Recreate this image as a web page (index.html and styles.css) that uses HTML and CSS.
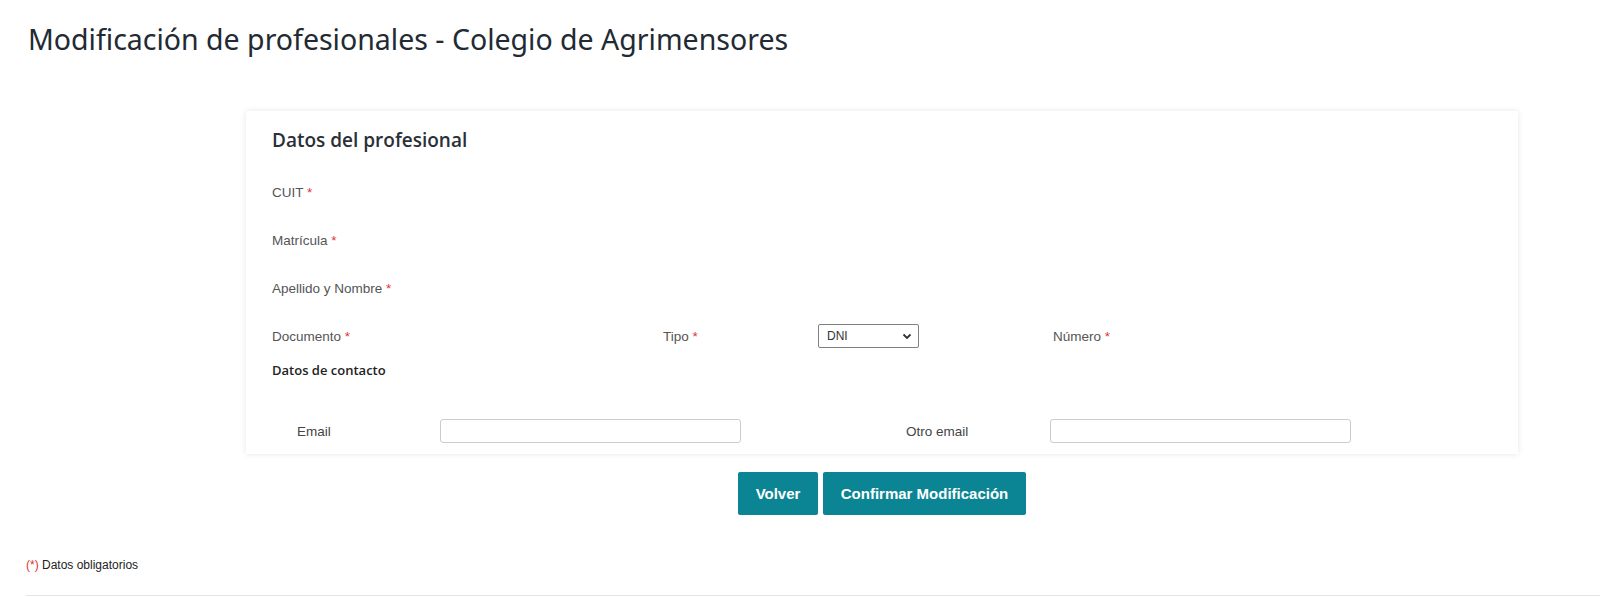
FILE: index.html
```html
<!DOCTYPE html>
<html lang="es">
<head>
<meta charset="utf-8">
<title>Modificación de profesionales</title>
<link rel="stylesheet" href="styles.css">
</head>
<body>
<h1 class="page-title">Modificación de profesionales - Colegio de Agrimensores</h1>
<div class="card">
  <h2 class="card-title">Datos del profesional</h2>
  <div class="fields">
    <div class="field"><span class="lbl">CUIT <span class="req">*</span></span></div>
    <div class="field"><span class="lbl">Matrícula <span class="req">*</span></span></div>
    <div class="field"><span class="lbl">Apellido y Nombre <span class="req">*</span></span></div>
    <div class="field doc-row">
      <span class="lbl">Documento <span class="req">*</span></span>
      <span class="lbl">Tipo <span class="req">*</span></span>
      <div class="select"><span>DNI</span>
        <svg width="10" height="7" viewBox="0 0 10 7"><path d="M1.5 1.5 L5 5 L8.5 1.5" fill="none" stroke="#333" stroke-width="1.8"/></svg>
      </div>
      <span class="lbl">Número <span class="req">*</span></span>
    </div>
  </div>
  <h3 class="sub-title">Datos de contacto</h3>
  <div class="contact-row">
    <span class="lbl lbl-c">Email</span>
    <div class="input"></div>
    <span class="lbl lbl-c2">Otro email</span>
    <div class="input"></div>
  </div>
</div>
<div class="actions">
  <button class="btn btn-back">Volver</button>
  <button class="btn btn-ok">Confirmar Modificación</button>
</div>
<p class="note"><span class="req2">(*)</span> Datos obligatorios</p>
<div class="rule"></div>
</body>
</html>
```

FILE: styles.css
```css
html, body { margin: 0; padding: 0; background: #fff; }
body { width: 1600px; height: 597px; overflow: hidden; font-family: "Liberation Sans", Arial, sans-serif; }
.page-title {
  margin: 0; padding: 19px 0 0 28px;
  font-family: "Noto Sans", Roboto, sans-serif; font-weight: 400; font-size: 28.5px; line-height: 40px;
  color: #222a33;
}
.card {
  margin: 52px 0 0 246px; width: 1272px; height: 343px; box-sizing: border-box;
  padding: 16px 26px 0 26px;
  background: #fff;
  box-shadow: 0 0 6px rgba(0,0,0,0.10);
}
.card-title {
  margin: 0; font-family: "Open Sans", "Noto Sans", sans-serif; font-weight: 600; font-size: 19px;
  line-height: 26px; color: #2b3038;
}
.fields { margin-top: 15px; }
.field { height: 48px; display: flex; align-items: center; }
.lbl { font-size: 13.5px; color: #555; white-space: nowrap; }
.req { color: #e0343b; }
.doc-row { display: grid; grid-template-columns: 391px 155px 235px 1fr; align-items: center; }
.select {
  width: 101px; height: 24px; box-sizing: border-box; border: 1px solid #808080; border-radius: 2px;
  display: flex; align-items: center; justify-content: space-between; padding: 0 6px 0 8px;
  font-size: 12px; color: #333;
}
.sub-title { margin: 0; font-family: "Open Sans", "Noto Sans", sans-serif; font-weight: 600; font-size: 13px; line-height: 20px; color: #222; }
.contact-row { margin-top: 39px; display: grid; grid-template-columns: 168px 301px 309px 301px; align-items: center; }
.lbl-c { padding-left: 25px; color: #444; }
.lbl-c2 { padding-left: 165px; color: #444; }
.input { height: 24px; box-sizing: border-box; border: 1px solid #ccc; border-radius: 3px; }
.actions { margin: 18px 0 0 738px; display: flex; gap: 5px; }
.btn {
  height: 43px; padding: 0; border: 0; border-radius: 2px; background: #0b8593; color: #fff;
  font-family: "Liberation Sans", Arial, sans-serif; font-weight: 700; font-size: 15px;
}
.btn-back { width: 80px; }
.btn-ok { width: 203px; }
.note { margin: 43px 0 0 26px; font-size: 12px; color: #222; line-height: 14px; }
.req2 { color: #d33; }
.rule { margin: 23px 0 0 26px; height: 1px; background: #e3e3e3; }
```
